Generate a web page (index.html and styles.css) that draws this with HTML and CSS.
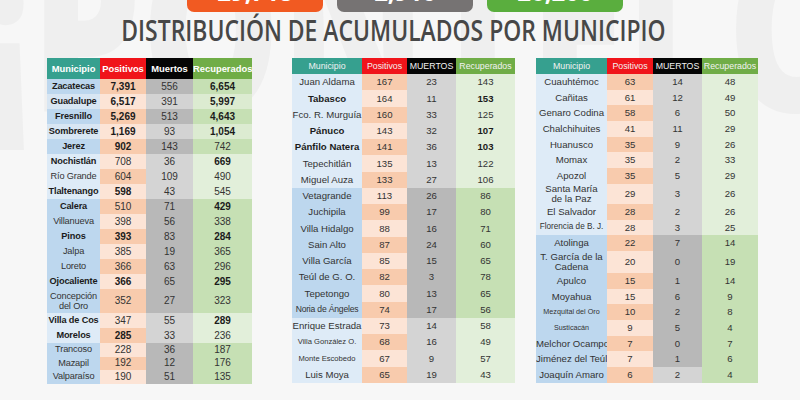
FILE: index.html
```html
<!DOCTYPE html>
<html lang="es">
<head>
<meta charset="utf-8">
<title>Distribución de acumulados por municipio</title>
<link rel="stylesheet" href="styles.css">
</head>
<body>
<div class="bg" aria-hidden="true"><div class="wm">¡PÓNTELO!</div></div>
<div class="page">
  <div class="stats">
    <div class="stat orange">29,718</div>
    <div class="stat gray">2,910</div>
    <div class="stat green">26,200</div>
  </div>
  <h1 class="title"><span>DISTRIBUCIÓN DE ACUMULADOS POR MUNICIPIO</span></h1>
  <div class="tables">
    <table class="t t1">
      <colgroup><col class="c1m"><col class="c1p"><col class="c1k"><col class="c1r"></colgroup>
      <thead><tr><th class="hm">Municipio</th><th class="hp">Positivos</th><th class="hk">Muertos</th><th class="hr">Recuperados</th></tr></thead>
      <tbody>
        <tr class="d"><td class="m b">Zacatecas</td><td class="p b">7,391</td><td class="k">556</td><td class="r b">6,654</td></tr>
        <tr class="a"><td class="m b">Guadalupe</td><td class="p b">6,517</td><td class="k">391</td><td class="r b">5,997</td></tr>
        <tr class="d"><td class="m b">Fresnillo</td><td class="p b">5,269</td><td class="k">513</td><td class="r b">4,643</td></tr>
        <tr class="a"><td class="m b">Sombrerete</td><td class="p b">1,169</td><td class="k">93</td><td class="r b">1,054</td></tr>
        <tr class="d"><td class="m b">Jerez</td><td class="p b">902</td><td class="k">143</td><td class="r">742</td></tr>
        <tr class="l"><td class="m b">Nochistlán</td><td class="p">708</td><td class="k">36</td><td class="r b">669</td></tr>
        <tr class="l"><td class="m">Río Grande</td><td class="p">604</td><td class="k">109</td><td class="r">490</td></tr>
        <tr class="l"><td class="m b">Tlaltenango</td><td class="p b">598</td><td class="k">43</td><td class="r">545</td></tr>
        <tr class="d"><td class="m b">Calera</td><td class="p">510</td><td class="k">71</td><td class="r b">429</td></tr>
        <tr class="d"><td class="m">Villanueva</td><td class="p">398</td><td class="k">56</td><td class="r">338</td></tr>
        <tr class="d"><td class="m b">Pinos</td><td class="p b">393</td><td class="k">83</td><td class="r b">284</td></tr>
        <tr class="d"><td class="m">Jalpa</td><td class="p">385</td><td class="k">19</td><td class="r">365</td></tr>
        <tr class="d"><td class="m">Loreto</td><td class="p">366</td><td class="k">63</td><td class="r">296</td></tr>
        <tr class="d"><td class="m b">Ojocaliente</td><td class="p b">366</td><td class="k">65</td><td class="r b">295</td></tr>
        <tr class="d x2"><td class="m two">Concepción<br>del Oro</td><td class="p">352</td><td class="k">27</td><td class="r">323</td></tr>
        <tr class="l"><td class="m b">Villa de Cos</td><td class="p">347</td><td class="k">55</td><td class="r b">289</td></tr>
        <tr class="l"><td class="m b">Morelos</td><td class="p b">285</td><td class="k">33</td><td class="r">236</td></tr>
        <tr class="d sh"><td class="m">Trancoso</td><td class="p">228</td><td class="k">36</td><td class="r">187</td></tr>
        <tr class="d sh"><td class="m">Mazapil</td><td class="p">192</td><td class="k">12</td><td class="r">176</td></tr>
        <tr class="d sh"><td class="m">Valparaíso</td><td class="p">190</td><td class="k">51</td><td class="r">135</td></tr>
      </tbody>
    </table>

    <table class="t t2">
      <colgroup><col class="c2m"><col class="c2p"><col class="c2k"><col class="c2r"></colgroup>
      <thead><tr><th class="hm">Municipio</th><th class="hp">Positivos</th><th class="hk">MUERTOS</th><th class="hr">Recuperados</th></tr></thead>
      <tbody>
        <tr class="l"><td class="m">Juan Aldama</td><td class="p">167</td><td class="k">23</td><td class="r">143</td></tr>
        <tr class="l"><td class="m b">Tabasco</td><td class="p">164</td><td class="k">11</td><td class="r b">153</td></tr>
        <tr class="l"><td class="m">Fco. R. Murguía</td><td class="p">160</td><td class="k">33</td><td class="r">125</td></tr>
        <tr class="l"><td class="m b">Pánuco</td><td class="p">143</td><td class="k">32</td><td class="r b">107</td></tr>
        <tr class="l"><td class="m b">Pánfilo Natera</td><td class="p">141</td><td class="k">36</td><td class="r b">103</td></tr>
        <tr class="l"><td class="m">Tepechitlán</td><td class="p">135</td><td class="k">13</td><td class="r">122</td></tr>
        <tr class="l"><td class="m">Miguel Auza</td><td class="p">133</td><td class="k">27</td><td class="r">106</td></tr>
        <tr class="d"><td class="m">Vetagrande</td><td class="p">113</td><td class="k">26</td><td class="r">86</td></tr>
        <tr class="d"><td class="m">Juchipila</td><td class="p">99</td><td class="k">17</td><td class="r">80</td></tr>
        <tr class="d"><td class="m">Villa Hidalgo</td><td class="p">88</td><td class="k">16</td><td class="r">71</td></tr>
        <tr class="d"><td class="m">Sain Alto</td><td class="p">87</td><td class="k">24</td><td class="r">60</td></tr>
        <tr class="d"><td class="m">Villa García</td><td class="p">85</td><td class="k">15</td><td class="r">65</td></tr>
        <tr class="d"><td class="m">Teúl de G. O.</td><td class="p">82</td><td class="k">3</td><td class="r">78</td></tr>
        <tr class="d"><td class="m">Tepetongo</td><td class="p">80</td><td class="k">13</td><td class="r">65</td></tr>
        <tr class="d"><td class="m s1">Noria de Ángeles</td><td class="p">74</td><td class="k">17</td><td class="r">56</td></tr>
        <tr class="l"><td class="m">Enrique Estrada</td><td class="p">73</td><td class="k">14</td><td class="r">58</td></tr>
        <tr class="l"><td class="m s3">Villa González O.</td><td class="p">68</td><td class="k">16</td><td class="r">49</td></tr>
        <tr class="l"><td class="m s3">Monte Escobedo</td><td class="p">67</td><td class="k">9</td><td class="r">57</td></tr>
        <tr class="l"><td class="m">Luis Moya</td><td class="p">65</td><td class="k">19</td><td class="r">43</td></tr>
      </tbody>
    </table>

    <table class="t t3">
      <colgroup><col class="c3m"><col class="c3p"><col class="c3k"><col class="c3r"></colgroup>
      <thead><tr><th class="hm">Municipio</th><th class="hp">Positivos</th><th class="hk">MUERTOS</th><th class="hr">Recuperados</th></tr></thead>
      <tbody>
        <tr class="l"><td class="m">Cuauhtémoc</td><td class="p">63</td><td class="k">14</td><td class="r">48</td></tr>
        <tr class="l"><td class="m">Cañitas</td><td class="p">61</td><td class="k">12</td><td class="r">49</td></tr>
        <tr class="l"><td class="m">Genaro Codina</td><td class="p">58</td><td class="k">6</td><td class="r">50</td></tr>
        <tr class="l"><td class="m">Chalchihuites</td><td class="p">41</td><td class="k">11</td><td class="r">29</td></tr>
        <tr class="l"><td class="m">Huanusco</td><td class="p">35</td><td class="k">9</td><td class="r">26</td></tr>
        <tr class="l"><td class="m">Momax</td><td class="p">35</td><td class="k">2</td><td class="r">33</td></tr>
        <tr class="l"><td class="m">Apozol</td><td class="p">35</td><td class="k">5</td><td class="r">29</td></tr>
        <tr class="l x3"><td class="m two">Santa María<br>de la Paz</td><td class="p">29</td><td class="k">3</td><td class="r">26</td></tr>
        <tr class="l"><td class="m">El Salvador</td><td class="p">28</td><td class="k">2</td><td class="r">26</td></tr>
        <tr class="l"><td class="m s2">Florencia de B. J.</td><td class="p">28</td><td class="k">3</td><td class="r">25</td></tr>
        <tr class="d"><td class="m">Atolinga</td><td class="p">22</td><td class="k">7</td><td class="r">14</td></tr>
        <tr class="d x4"><td class="m two">T. García de la<br>Cadena</td><td class="p">20</td><td class="k">0</td><td class="r">19</td></tr>
        <tr class="d"><td class="m">Apulco</td><td class="p">15</td><td class="k">1</td><td class="r">14</td></tr>
        <tr class="d"><td class="m">Moyahua</td><td class="p">15</td><td class="k">6</td><td class="r">9</td></tr>
        <tr class="d"><td class="m s4">Mezquital del Oro</td><td class="p">10</td><td class="k">2</td><td class="r">8</td></tr>
        <tr class="d"><td class="m s4">Susticacán</td><td class="p">9</td><td class="k">5</td><td class="r">4</td></tr>
        <tr class="d"><td class="m">Melchor Ocampo</td><td class="p">7</td><td class="k">0</td><td class="r">7</td></tr>
        <tr class="d"><td class="m">Jiménez del Teúl</td><td class="p">7</td><td class="k">1</td><td class="r">6</td></tr>
        <tr class="d lk"><td class="m">Joaquín Amaro</td><td class="p">6</td><td class="k">2</td><td class="r">4</td></tr>
      </tbody>
    </table>
  </div>
</div>
</body>
</html>
```

FILE: styles.css
```css
html, body {
  margin: 0;
  padding: 0;
}
body {
  width: 800px;
  height: 400px;
  overflow: hidden;
  position: relative;
  background: #f7f7f7;
  font-family: "Liberation Sans", Arial, sans-serif;
  color: #222;
}
.bg {
  position: absolute;
  left: 0;
  top: 0;
  width: 800px;
  height: 400px;
  overflow: hidden;
  z-index: 0;
}
.wm {
  position: absolute;
  left: -20px;
  top: -92px;
  font-family: "Open Sans", sans-serif;
  font-weight: 800;
  font-size: 230px;
  line-height: 1;
  color: #efefef;
  white-space: nowrap;
  transform: scaleX(0.76);
  transform-origin: 0 0;
}
.page {
  position: relative;
  z-index: 1;
}
.stats {
  display: flex;
  gap: 14px;
  margin: -28px 0 0 187px;
}
.stat {
  width: 136px;
  height: 40px;
  box-sizing: border-box;
  border-radius: 7px;
  color: #fff;
  font-family: "Open Sans", sans-serif;
  font-weight: 700;
  font-size: 24px;
  line-height: 1;
  display: flex;
  align-items: flex-end;
  justify-content: center;
  padding-bottom: 8px;
}
.orange { background: #f15a22; }
.gray { background: #767373; }
.green { background: #5aae3e; }
.title {
  margin: 3px 0 0;
  padding-right: 13px;
  text-align: center;
  font-family: "Open Sans", sans-serif;
  font-weight: 600;
  font-size: 29px;
  line-height: 30px;
  color: #474747;
  white-space: nowrap;
}
.title span {
  display: inline-block;
  transform: scaleX(0.79);
  transform-origin: 50% 50%;
}
.tables {
  display: flex;
  align-items: flex-start;
  margin-top: 13px;
  padding-left: 47px;
}
.t {
  border-collapse: collapse;
  table-layout: fixed;
  border-spacing: 0;
}
.t th, .t td {
  padding: 0;
  text-align: center;
  vertical-align: middle;
  white-space: nowrap;
  overflow: hidden;
  line-height: 1;
}
.t1 { width: 205px; }
.t2 { width: 223px; margin-left: 40px; }
.t3 { width: 222px; margin-left: 21px; }
.c1m { width: 53px; } .c1p { width: 46px; } .c1k { width: 47px; } .c1r { width: 59px; }
.c2m { width: 70px; } .c2p { width: 45px; } .c2k { width: 49px; } .c2r { width: 59px; }
.c3m { width: 71px; } .c3p { width: 46px; } .c3k { width: 49px; } .c3r { width: 56px; }

.t th { color: #fff; }
.hm { background: #36a08f; }
.hp { background: #f0141a; }
.hk { background: #050505; }
.hr { background: #70ad47; }
.t1 th {
  height: 21px;
  font-size: 9.4px;
  font-weight: 700;
}
.t2 th, .t3 th {
  height: 16px;
  font-size: 8.8px;
  font-weight: 400;
  color: #f2f2f2;
}
.t td {
  font-size: 9.6px;
  color: #333;
}
.t1 td { height: 15px; }
.t1 td.m { font-size: 9.2px; letter-spacing: -0.15px; }
.t1 td.p, .t1 td.r, .t1 td.k { font-size: 10px; }
.t1 .x2 td { height: 24px; }
.t1 .sh td { height: 13.5px; }
.t2 td { height: 16.26px; }
.t3 td { height: 15.7px; }
.t3 .x3 td { height: 20px; }
.t3 .x4 td { height: 22px; }
.t td.b { font-weight: 700; color: #1b1b1b; }
.t td.two { white-space: normal; line-height: 10px; }
.t td.s1 { font-size: 8.6px; letter-spacing: -0.2px; }
.t td.s2 { font-size: 8.2px; }
.t td.s3 { font-size: 7.6px; }
.t td.s4 { font-size: 7.2px; }

.d .m { background: #bdd7ee; }
.d .k { background: #b8b8b8; }
.d .r { background: #c6e0b4; }
.l .m { background: #deebf7; }
.l .k { background: #d4d4d4; }
.l .r { background: #e2efda; }
.a .m { background: #d8e6f3; }
.a .k { background: #d3d3d3; }
.a .r { background: #dcebd1; }
.lk .k { background: #d4d4d4; }
.t tbody tr:nth-child(odd) .p { background: #f8cbad; }
.t tbody tr:nth-child(even) .p { background: #fce4d6; }
```
